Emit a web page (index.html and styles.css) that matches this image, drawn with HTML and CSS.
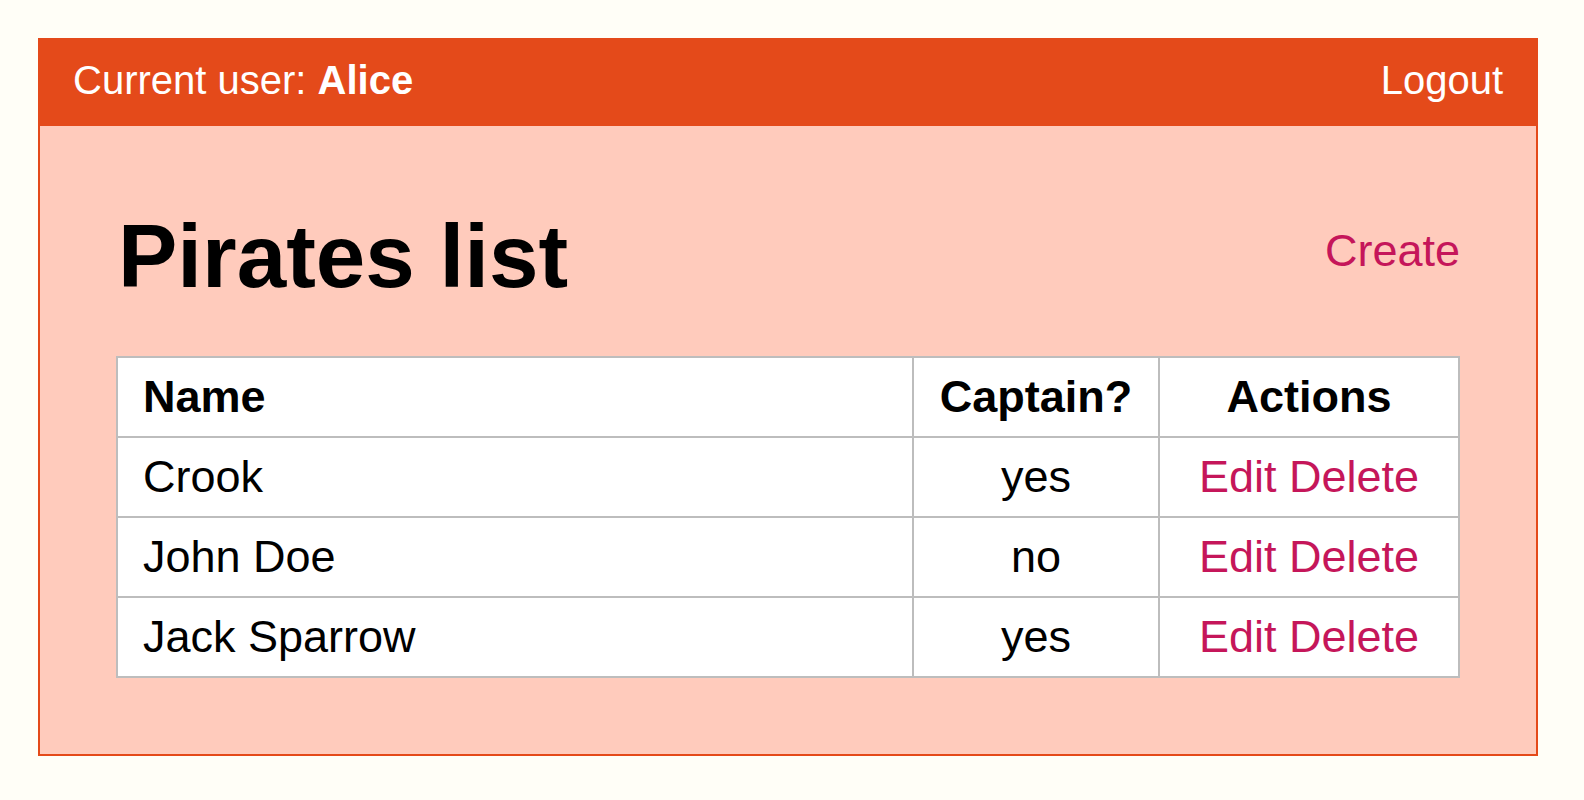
FILE: index.html
```html
<!DOCTYPE html>
<html lang="en">
<head>
<meta charset="utf-8">
<title>Pirates list</title>
<link rel="stylesheet" href="styles.css">
</head>
<body>
  <div class="app">
    <header class="topbar">
      <span class="user">Current user: <strong>Alice</strong></span>
      <a class="logout" href="#">Logout</a>
    </header>
    <main class="content">
      <div class="title-row">
        <h1 class="title">Pirates list</h1>
        <a class="link create" href="#">Create</a>
      </div>
      <table class="pirates">
        <colgroup>
          <col class="col-name">
          <col class="col-captain">
          <col class="col-actions">
        </colgroup>
        <thead>
          <tr>
            <th class="left">Name</th>
            <th>Captain?</th>
            <th>Actions</th>
          </tr>
        </thead>
        <tbody>
          <tr>
            <td class="left">Crook</td>
            <td>yes</td>
            <td><a class="link" href="#">Edit</a> <a class="link" href="#">Delete</a></td>
          </tr>
          <tr>
            <td class="left">John Doe</td>
            <td>no</td>
            <td><a class="link" href="#">Edit</a> <a class="link" href="#">Delete</a></td>
          </tr>
          <tr>
            <td class="left">Jack Sparrow</td>
            <td>yes</td>
            <td><a class="link" href="#">Edit</a> <a class="link" href="#">Delete</a></td>
          </tr>
        </tbody>
      </table>
    </main>
  </div>
</body>
</html>
```

FILE: styles.css
```css
html, body {
  margin: 0;
  padding: 0;
  background: #fffef7;
  font-family: "Liberation Sans", Arial, Helvetica, sans-serif;
  color: #000;
}

.app {
  margin: 38px 0 0 38px;
  width: 1500px;
  box-sizing: border-box;
  border: 2px solid #e44a1a;
  background: #ffcbbc;
}

.topbar {
  display: flex;
  justify-content: space-between;
  align-items: flex-start;
  background: #e44a1a;
  color: #fff;
  font-size: 40px;
  line-height: 46px;
  padding: 17px 33px 23px 33px;
}

.topbar strong {
  font-weight: bold;
}

.logout {
  color: #fff;
  text-decoration: none;
}

.content {
  padding: 78px 76px 76px 76px;
}

.title-row {
  display: flex;
  justify-content: space-between;
  align-items: flex-start;
  margin-bottom: 48px;
}

.title {
  margin: 0;
  padding-left: 2px;
  font-size: 89px;
  line-height: 104px;
  font-weight: bold;
}

.link {
  color: #c5165a;
  text-decoration: none;
}

.create {
  font-size: 45px;
  line-height: 52px;
  margin-top: 21px;
}

.pirates {
  width: 1344px;
  table-layout: fixed;
  border-collapse: separate;
  border-spacing: 0;
  border-left: 2px solid #bdbdbd;
  border-top: 2px solid #bdbdbd;
  background: #fff;
  font-size: 45px;
  line-height: 52px;
}

.col-name { width: 796px; }
.col-captain { width: 246px; }
.col-actions { width: 300px; }

.pirates th,
.pirates td {
  border-right: 2px solid #bdbdbd;
  border-bottom: 2px solid #bdbdbd;
  padding: 13px 23px;
  text-align: center;
  vertical-align: middle;
  white-space: nowrap;
}

.pirates th {
  font-weight: bold;
}

.pirates .left {
  text-align: left;
  padding-left: 25px;
}
```
